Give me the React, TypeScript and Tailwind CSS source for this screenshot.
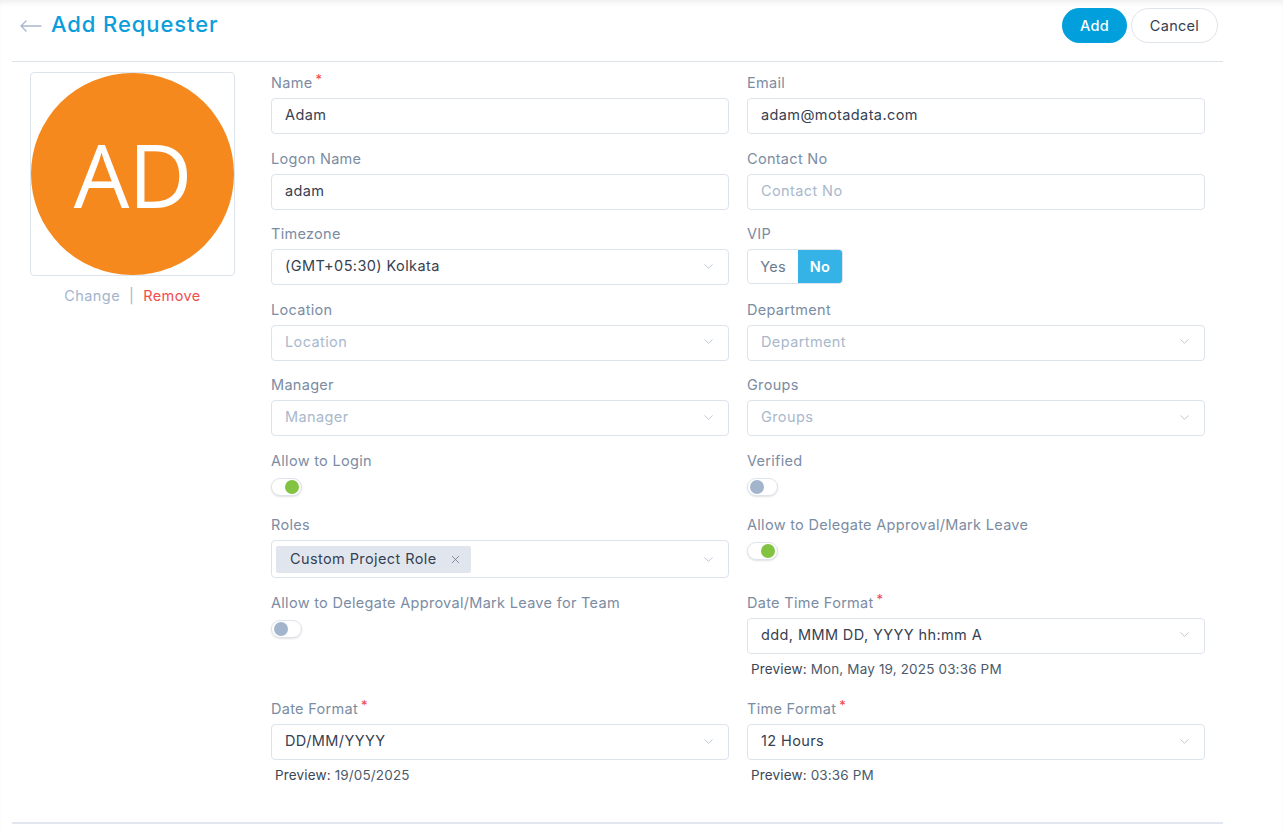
import { ChevronDown, X } from 'lucide-react';
import type { ReactNode } from 'react';

const font = { fontFamily: 'Inter, "Noto Sans", sans-serif' };

function Label({ text, required }: { text: string; required?: boolean }) {
  return (
    <div className="h-[20px] mb-[6px] flex items-start text-[14.5px] leading-[21px] text-[#7b8ca3] tracking-[0.3px]">
      {text}
      {required && <span className="text-[#ef4444] text-[13px] leading-[14px] ml-[3px]">*</span>}
    </div>
  );
}

function TextInput({ value, placeholder }: { value?: string; placeholder?: string }) {
  return (
    <div className="h-[36px] border border-[#dde3ec] rounded-[4px] px-[13px] pb-[2px] flex items-center text-[14.5px] tracking-[0.4px]">
      {value ? (
        <span className="text-[#364152]">{value}</span>
      ) : (
        <span className="text-[#a9b8cb]">{placeholder}</span>
      )}
    </div>
  );
}

function Select({ value, placeholder, children, tall }: { value?: string; placeholder?: string; children?: ReactNode; tall?: boolean }) {
  return (
    <div
      className={`${tall ? 'h-[38px] pl-[4px]' : 'h-[36px] pl-[13px] pb-[2px]'} border border-[#dde3ec] rounded-[4px] pr-[12px] flex items-center text-[14.5px] tracking-[0.4px]`}
    >
      <div className="flex-1 flex items-center">
        {children ??
          (value ? (
            <span className="text-[#364152]">{value}</span>
          ) : (
            <span className="text-[#a9b8cb]">{placeholder}</span>
          ))}
      </div>
      <ChevronDown size={15} strokeWidth={1.2} className="text-[#a9b8cb]" />
    </div>
  );
}

function Toggle({ on }: { on?: boolean }) {
  return (
    <div className="h-[25px] pt-[2px]">
      <div className="w-[31px] h-[18px] rounded-full border border-[#dfe4ec] bg-white shadow-[0_1px_2px_rgba(0,0,0,0.12)] flex items-center px-[2px]">
        <div
          className={`w-[14px] h-[14px] rounded-full ${on ? 'bg-[#82c341] ml-auto' : 'bg-[#a3b5cd]'}`}
        />
      </div>
    </div>
  );
}

function Preview({ value }: { value: string }) {
  return (
    <div className="mt-[5px] pl-[4px] h-[20px] text-[13.5px] leading-[20px] tracking-[0.15px]">
      <span className="text-[#3b4656]">Preview: </span>
      <span className="text-[#4d5a6b]">{value}</span>
    </div>
  );
}

export default function App() {
  return (
    <div className="min-h-[832px] bg-white shadow-[inset_0_5px_6px_-3px_rgba(0,0,0,0.08)]" style={font}>
      <div className="w-[1211px] ml-[12px]">
        <div className="h-[62px] border-b border-[#dde2ea] flex items-start justify-between pt-[8px] pl-[8px] pr-[5px]">
          <div className="h-[35px] flex items-center">
            <svg width="22" height="12" viewBox="0 0 22 12" className="mr-[9px]">
              <path d="M1 6H21M1 6L6 1M1 6L6 11" stroke="#a9b8cb" strokeWidth="1.4" fill="none" strokeLinecap="round" strokeLinejoin="round" />
            </svg>
            <span className="text-[22px] font-medium text-[#0c9edb] tracking-[0.9px] leading-[28px] -mt-[4px]">Add Requester</span>
          </div>
          <div className="flex gap-[4px]">
            <button className="h-[35px] w-[65px] rounded-full bg-[#019fdc] text-white text-[14.5px] font-medium tracking-[0.3px]">
              Add
            </button>
            <button className="h-[35px] w-[87px] rounded-full border border-[#dfe3ea] bg-white text-[#364152] text-[14.5px] tracking-[0.3px]">
              Cancel
            </button>
          </div>
        </div>

        <div className="flex pl-[18px] pt-[10px] pb-[37px] border-b-2 border-[#e2e6ee]">
          <div className="w-[205px] shrink-0">
            <div className="w-[205px] h-[204px] border border-[#dde3ec] rounded-[4px] flex items-center justify-center">
              <div
                className="w-[203px] h-[202px] rounded-full bg-[#f5891e] flex items-center justify-center text-white text-[88px] leading-none"
                style={{ fontFamily: '"Open Sans", sans-serif' }}
              >
                <span className="-mt-[1px] tracking-[-1px]">AD</span>
              </div>
            </div>
            <div className="mt-[9px] flex justify-center items-center text-[14.5px] tracking-[0.4px]">
              <span className="text-[#a3b5cd]">Change</span>
              <span className="text-[#a3b5cd] mx-[9px]">|</span>
              <span className="text-[#ef4e4e]">Remove</span>
            </div>
          </div>

          <div className="ml-[36px] w-[934px] grid grid-cols-2 gap-x-[18px] gap-y-[13.5px] content-start">
            <div>
              <Label text="Name" required />
              <TextInput value="Adam" />
            </div>
            <div>
              <Label text="Email" />
              <TextInput value="adam@motadata.com" />
            </div>

            <div>
              <Label text="Logon Name" />
              <TextInput value="adam" />
            </div>
            <div>
              <Label text="Contact No" />
              <TextInput placeholder="Contact No" />
            </div>

            <div>
              <Label text="Timezone" />
              <Select value="(GMT+05:30) Kolkata" />
            </div>
            <div>
              <Label text="VIP" />
              <div className="w-[96px] h-[35px] border border-[#dde3ec] rounded-[4px] flex overflow-hidden text-[14.5px] tracking-[0.3px]">
                <div className="w-[50px] flex items-center justify-center text-[#6b7b90]">Yes</div>
                <div className="flex-1 flex items-center justify-center bg-[#35b2e6] text-white font-semibold">No</div>
              </div>
            </div>

            <div>
              <Label text="Location" />
              <Select placeholder="Location" />
            </div>
            <div>
              <Label text="Department" />
              <Select placeholder="Department" />
            </div>

            <div>
              <Label text="Manager" />
              <Select placeholder="Manager" />
            </div>
            <div>
              <Label text="Groups" />
              <Select placeholder="Groups" />
            </div>

            <div>
              <Label text="Allow to Login" />
              <Toggle on />
            </div>
            <div>
              <Label text="Verified" />
              <Toggle />
            </div>

            <div>
              <Label text="Roles" />
              <Select tall>
                <span className="h-[27px] bg-[#e1e6ee] rounded-[2px] pl-[14px] pr-[9px] flex items-center text-[#364152]">
                  Custom Project Role
                  <X size={13} strokeWidth={1.5} className="ml-[12px] text-[#6b7b90]" />
                </span>
              </Select>
            </div>
            <div>
              <Label text="Allow to Delegate Approval/Mark Leave" />
              <Toggle on />
            </div>

            <div>
              <Label text="Allow to Delegate Approval/Mark Leave for Team" />
              <Toggle />
            </div>
            <div className="pb-[6px]">
              <Label text="Date Time Format" required />
              <Select value="ddd, MMM DD, YYYY hh:mm A" />
              <Preview value="Mon, May 19, 2025 03:36 PM" />
            </div>

            <div>
              <Label text="Date Format" required />
              <Select value="DD/MM/YYYY" />
              <Preview value="19/05/2025" />
            </div>
            <div>
              <Label text="Time Format" required />
              <Select value="12 Hours" />
              <Preview value="03:36 PM" />
            </div>
          </div>
        </div>
      </div>
    </div>
  );
}
